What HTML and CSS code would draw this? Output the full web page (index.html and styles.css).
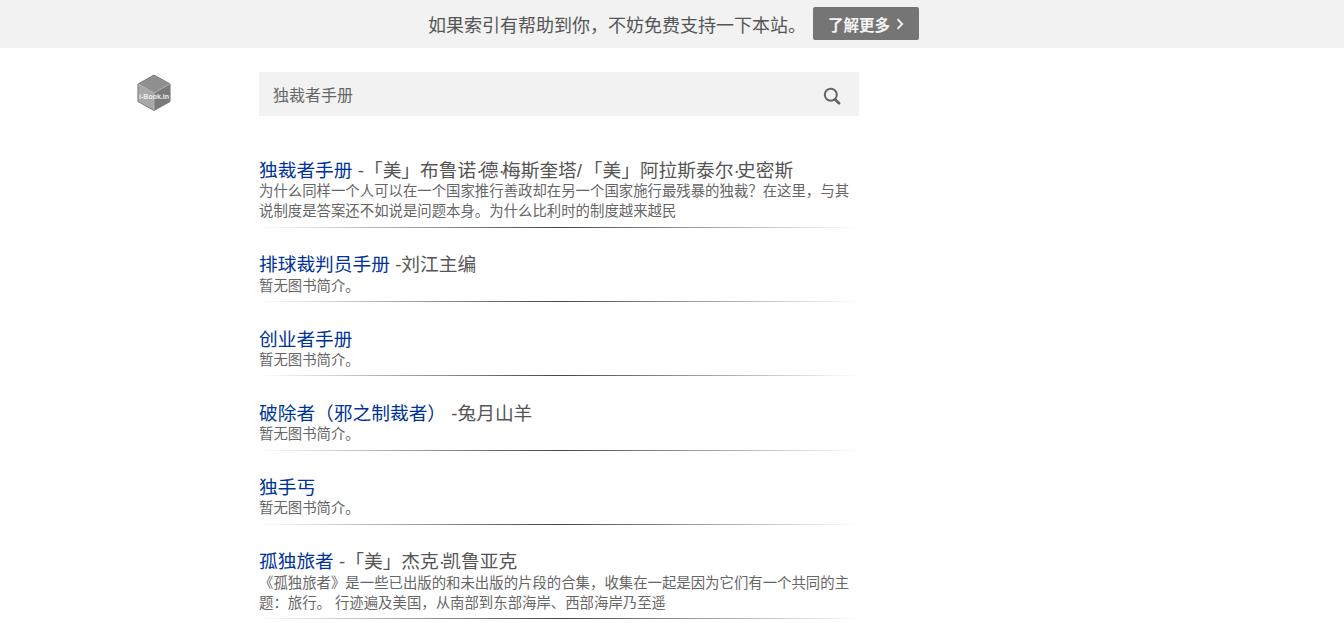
FILE: index.html
```html
<!DOCTYPE html>
<html lang="zh-CN">
<head>
<meta charset="utf-8">
<title>独裁者手册</title>
<link rel="stylesheet" href="styles.css">
</head>
<body>
<header class="banner">
  <span class="banner-text">如果索引有帮助到你，不妨免费支持一下本站。</span>
  <a class="banner-btn" href="#">了解更多
    <svg class="chevron" width="8" height="12" viewBox="0 0 8 12"><path d="M1.5 1.2 6.2 6 1.5 10.8" fill="none" stroke="#f4f4f4" stroke-width="1.8"/></svg>
  </a>
</header>
<div class="page">
  <a class="logo" href="#">
    <svg width="34" height="38" viewBox="0 0 36 40">
      <polygon points="18,1 35,10.5 35,29 18,38.5 1,29 1,10.5" fill="#8a8a8a" stroke="#6f6f6f" stroke-width="1"/>
      <polygon points="18,1.5 34.5,10.5 18,20 1.5,10.5" fill="#8f8f8f"/>
      <polygon points="18,20 34.5,10.5 34.5,29 18,38" fill="#7a7a7a"/>
      <polygon points="18,20 1.5,10.5 1.5,29 18,38" fill="#a8a8a8"/>
      <path d="M1.5 10.5 18 20 34.5 10.5M18 20V38" fill="none" stroke="#bdbdbd" stroke-width=".8"/>
      <text class="logo-text" x="18" y="26.5" text-anchor="middle">i-Book.in</text>
    </svg>
  </a>
  <main class="content">
    <form class="search">
      <span class="search-text">独裁者手册</span>
      <svg width="18" height="18" viewBox="0 0 18 18"><circle cx="7.8" cy="7.8" r="6" fill="none" stroke="#666" stroke-width="2"/><path d="M12.2 12.4 16 16.2" stroke="#666" stroke-width="2.8" stroke-linecap="round"/></svg>
    </form>
    <section class="results">
      <article class="item">
        <h3 class="item-title"><a href="#">独裁者手册</a> -「美」布鲁诺<span class="dot">·</span>德<span class="dot">·</span>梅斯奎塔<span class="slash">/</span>「美」阿拉斯泰尔<span class="dot">·</span>史密斯</h3>
        <p class="item-desc">为什么同样一个人可以在一个国家推行善政却在另一个国家施行最残暴的独裁？在这里，与其说制度是答案还不如说是问题本身。为什么比利时的制度越来越民</p>
      </article>
      <article class="item">
        <h3 class="item-title"><a href="#">排球裁判员手册</a> -刘江主编</h3>
        <p class="item-desc">暂无图书简介。</p>
      </article>
      <article class="item">
        <h3 class="item-title"><a href="#">创业者手册</a></h3>
        <p class="item-desc">暂无图书简介。</p>
      </article>
      <article class="item">
        <h3 class="item-title"><a href="#">破除者（邪之制裁者）</a> -兔月山羊</h3>
        <p class="item-desc">暂无图书简介。</p>
      </article>
      <article class="item">
        <h3 class="item-title"><a href="#">独手丐</a></h3>
        <p class="item-desc">暂无图书简介。</p>
      </article>
      <article class="item">
        <h3 class="item-title"><a href="#">孤独旅者</a> -「美」杰克<span class="dot">·</span>凯鲁亚克</h3>
        <p class="item-desc">《孤独旅者》是一些已出版的和未出版的片段的合集，收集在一起是因为它们有一个共同的主题：旅行。 行迹遍及美国，从南部到东部海岸、西部海岸乃至遥</p>
      </article>
    </section>
  </main>
</div>
</body>
</html>
```

FILE: styles.css
```css
* { box-sizing: border-box; }
html, body { margin: 0; padding: 0; }
body {
  background: #fff;
  color: #555;
  font-family: "Liberation Sans", "Noto Sans CJK SC", sans-serif;
  overflow: hidden;
}
a { text-decoration: none; }

.banner {
  height: 48px;
  background: #f2f2f2;
  display: flex;
  align-items: center;
  padding-left: 428px;
}
.banner-text { font-size: 18px; color: #555; width: 385px; white-space: nowrap; }
.banner-btn {
  width: 106px;
  height: 33px;
  margin-top: -1px;
  background: #757575;
  border-radius: 2px;
  color: #f4f4f4;
  font-size: 15.5px;
  font-weight: 700;
  display: flex;
  align-items: center;
  justify-content: center;
  gap: 6px;
}

.page { display: flex; padding: 24px 0 0 137px; }
.logo { width: 122px; padding-top: 2px; display: block; }
.logo-text { font-size: 7.4px; font-weight: 700; fill: #eee; font-family: "Liberation Sans", sans-serif; }
.content { width: 600px; }

.search {
  height: 44px;
  background: #f2f2f2;
  display: flex;
  align-items: center;
  justify-content: space-between;
  padding: 0 18px 0 14px;
}
.search-text { font-size: 16px; color: #666; line-height: 1; margin-top: 4px; }
.search svg { margin-top: 3px; }

.results { padding-top: 43px; }
.item { padding-bottom: 6.5px; margin-bottom: 25.5px; position: relative; }
.item::after {
  content: "";
  position: absolute;
  left: 0; right: 0; bottom: 0;
  height: 1px;
  background: linear-gradient(to right, rgba(60,60,60,0), rgba(60,60,60,.95) 50%, rgba(60,60,60,0));
}
.item-title {
  margin: 0;
  font-size: 18.72px;
  font-weight: 400;
  line-height: 24.25px;
  color: #555;
  white-space: nowrap;
}
.item-title a { color: #039; }
.dot { letter-spacing: -2.7px; }
.slash { letter-spacing: 1.8px; }
.item-desc {
  margin: -2px 0 0;
  font-size: 14.4px;
  line-height: 20px;
  color: #666;
}
```
